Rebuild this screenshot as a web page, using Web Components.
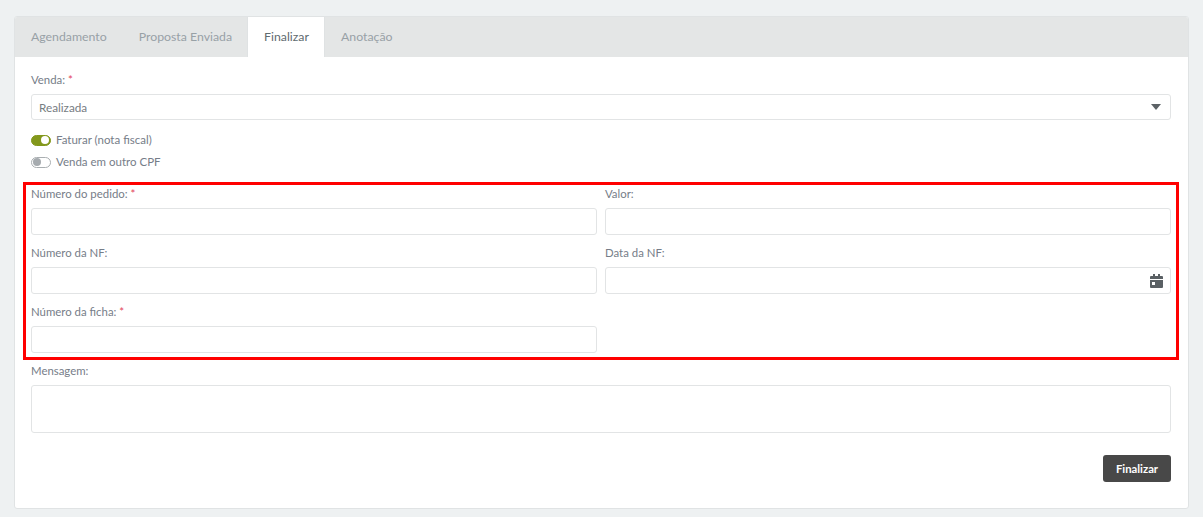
<!DOCTYPE html>
<html lang="pt">
<head>
<meta charset="utf-8">
<title>Finalizar</title>
<style>
  html, body { height: 100%; }
  body {
    margin: 0;
    padding: 16px 14px 8px;
    box-sizing: border-box;
    background: #eef1f2;
    font: 11.4px/17px Lato, "Open Sans", sans-serif;
    color: #6c757d;
  }
</style>
</head>
<body>
<sale-card>
  <tab-bar slot="tabs">
    <tab-item>Agendamento</tab-item>
    <tab-item>Proposta Enviada</tab-item>
    <tab-item active>Finalizar</tab-item>
    <tab-item>Anotação</tab-item>
  </tab-bar>

  <form-field label="Venda:" required>
    <select-box value="Realizada"></select-box>
  </form-field>

  <toggle-list>
    <toggle-switch on>Faturar (nota fiscal)</toggle-switch>
    <toggle-switch>Venda em outro CPF</toggle-switch>
  </toggle-list>

  <marked-grid>
    <form-field label="Número do pedido:" required><text-box></text-box></form-field>
    <form-field label="Valor:"><text-box></text-box></form-field>
    <form-field label="Número da NF:"><text-box></text-box></form-field>
    <form-field label="Data da NF:"><text-box calendar></text-box></form-field>
    <form-field label="Número da ficha:" required><text-box></text-box></form-field>
  </marked-grid>

  <form-field label="Mensagem:"><text-box tall></text-box></form-field>

  <form-actions><dark-button>Finalizar</dark-button></form-actions>
</sale-card>

<script>
function shadow(el, html) {
  el.attachShadow({ mode: "open" }).innerHTML = html;
}

class SaleCard extends HTMLElement {
  connectedCallback() {
    shadow(this, `
      <style>
        :host {
          display: block;
          height: 493px;
          box-sizing: border-box;
          background: #fff;
          border: 1px solid #e0e3e4;
          border-radius: 3px;
        }
        .body { padding: 15px 17px 0 16px; }
      </style>
      <slot name="tabs"></slot>
      <div class="body"><slot></slot></div>
    `);
  }
}

class TabBar extends HTMLElement {
  connectedCallback() {
    shadow(this, `
      <style>
        :host {
          display: flex;
          height: 40px;
          background: #e4e6e6;
          border-radius: 2px 2px 0 0;
        }
      </style>
      <slot></slot>
    `);
  }
}

class TabItem extends HTMLElement {
  connectedCallback() {
    shadow(this, `
      <style>
        :host {
          display: flex;
          align-items: center;
          padding: 0 16px 2px;
          color: #98a1a6;
          font-size: 12.3px;
        }
        :host([active]) {
          background: #fff;
          color: #5f6b70;
          margin-left: -1px;
          border-left: 1px solid #dfe2e3;
          border-right: 1px solid #dfe2e3;
          padding: 0 15px 2px 16px;
        }
      </style>
      <slot></slot>
    `);
  }
}

class FormField extends HTMLElement {
  connectedCallback() {
    const star = this.hasAttribute("required") ? ` <b>*</b>` : "";
    shadow(this, `
      <style>
        :host { display: block; }
        label {
          display: block;
          height: 17px;
          line-height: 15px;
          margin-bottom: 5px;
          color: #767d88;
        }
        b { color: #e2445c; font-weight: 400; }
      </style>
      <label>${this.getAttribute("label")}${star}</label>
      <slot></slot>
    `);
  }
}

class SelectBox extends HTMLElement {
  connectedCallback() {
    shadow(this, `
      <style>
        :host {
          display: flex;
          align-items: center;
          justify-content: space-between;
          height: 26px;
          box-sizing: border-box;
          padding: 0 9px 0 7px;
          background: #fff;
          border: 1px solid #e2e4e5;
          border-radius: 3px;
          color: #767d82;
          font-size: 11.75px;
        }
        svg { display: block; }
      </style>
      <span>${this.getAttribute("value")}</span>
      <svg width="10" height="6" viewBox="0 0 10 6"><path d="M0 0h10L5 6z" fill="#5c6266"/></svg>
    `);
  }
}

class TextBox extends HTMLElement {
  connectedCallback() {
    const icon = this.hasAttribute("calendar")
      ? `<svg width="13" height="14" viewBox="0 0 13 14"><path fill="#5a6064" d="M3 0h2v2h3V0h2v2h2a1 1 0 0 1 1 1v2H0V3a1 1 0 0 1 1-1h2zM0 6h13v7a1 1 0 0 1-1 1H1a1 1 0 0 1-1-1zm2 2v3h3V8z" fill-rule="evenodd"/></svg>`
      : "";
    shadow(this, `
      <style>
        :host {
          display: flex;
          align-items: center;
          justify-content: flex-end;
          height: 27px;
          box-sizing: border-box;
          padding-right: 7px;
          background: #fff;
          border: 1px solid #e2e4e5;
          border-radius: 3px;
        }
        :host([tall]) { height: 48px; }
        svg { display: block; }
      </style>
      ${icon}
    `);
  }
}

class ToggleList extends HTMLElement {
  connectedCallback() {
    shadow(this, `
      <style>
        :host {
          display: flex;
          flex-direction: column;
          gap: 5px;
          margin: 12px 0 11px;
        }
      </style>
      <slot></slot>
    `);
  }
}

class ToggleSwitch extends HTMLElement {
  connectedCallback() {
    shadow(this, `
      <style>
        :host {
          display: flex;
          align-items: center;
          gap: 5px;
          height: 17px;
          color: #767d88;
          font-size: 11.5px;
        }
        span { line-height: 15px; margin-bottom: 2px; }
        i {
          display: flex;
          align-items: center;
          width: 20px;
          height: 11px;
          margin-bottom: 1px;
          box-sizing: border-box;
          border: 1px solid #a9aeb1;
          border-radius: 6px;
          background: #fff;
        }
        i::before {
          content: "";
          width: 8px;
          height: 8px;
          margin-left: 1px;
          border-radius: 50%;
          background: #a6abaf;
        }
        :host([on]) i { background: #83981c; border-color: #83981c; }
        :host([on]) i::before { background: #fff; margin-left: 9px; }
      </style>
      <i></i><span><slot></slot></span>
    `);
  }
}

class MarkedGrid extends HTMLElement {
  connectedCallback() {
    shadow(this, `
      <style>
        :host {
          display: grid;
          grid-template-columns: 1fr 1fr;
          column-gap: 8px;
          row-gap: 10px;
          margin: 0 -8px 3px;
          padding: 1px 5px 4px;
          border: 3px solid #f00;
        }
      </style>
      <slot></slot>
    `);
  }
}

class FormActions extends HTMLElement {
  connectedCallback() {
    shadow(this, `
      <style>
        :host {
          display: flex;
          justify-content: flex-end;
          margin-top: 22px;
        }
      </style>
      <slot></slot>
    `);
  }
}

class DarkButton extends HTMLElement {
  connectedCallback() {
    shadow(this, `
      <style>
        :host {
          display: flex;
          align-items: center;
          justify-content: center;
          width: 68px;
          height: 27px;
          background: #484848;
          border-radius: 3px;
          color: #fff;
          font-weight: 700;
          font-size: 11.3px;
        }
      </style>
      <slot></slot>
    `);
  }
}

customElements.define("sale-card", SaleCard);
customElements.define("tab-bar", TabBar);
customElements.define("tab-item", TabItem);
customElements.define("form-field", FormField);
customElements.define("select-box", SelectBox);
customElements.define("text-box", TextBox);
customElements.define("toggle-list", ToggleList);
customElements.define("toggle-switch", ToggleSwitch);
customElements.define("marked-grid", MarkedGrid);
customElements.define("form-actions", FormActions);
customElements.define("dark-button", DarkButton);
</script>
</body>
</html>
